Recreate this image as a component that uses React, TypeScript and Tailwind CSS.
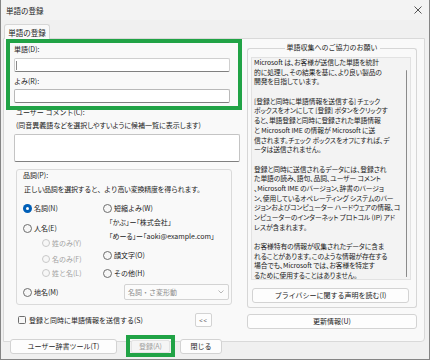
import React from "react";

const infoLines = [
  "Microsoft は、お客様が送信した単語を統計",
  "的に処理し、その結果を基に、より良い製品の",
  "開発を目指しています。",
  "",
  "[登録と同時に単語情報を送信する] チェック",
  "ボックスをオンにして [登録] ボタンをクリックす",
  "ると、単語登録と同時に登録された単語情報",
  "と Microsoft IME の情報が Microsoft に送",
  "信されます。チェック ボックスをオフにすれば、デ",
  "ータは送信されません。",
  "",
  "登録と同時に送信されるデータには、登録され",
  "た単語の読み、語句、品詞、ユーザー コメント",
  "、Microsoft IME のバージョン、辞書のバージョ",
  "ン、使用しているオペレーティング システムのバー",
  "ジョンおよびコンピューター ハードウェアの情報、コ",
  "ンピューターのインターネット プロトコル (IP) アド",
  "レスが含まれます。",
  "",
  "お客様特有の情報が収集されたデータに含ま",
  "れることがあります。このような情報が存在する",
  "場合でも、Microsoft では、お客様を特定す",
  "るために使用することはありません。",
];

function Radio({
  label,
  checked = false,
  disabled = false,
  small = false,
}: {
  label: string;
  checked?: boolean;
  disabled?: boolean;
  small?: boolean;
}) {
  return (
    <div className="flex items-center h-[10px] gap-[2px]">
      {checked ? (
        <span className="w-[9px] h-[9px] rounded-full bg-[#005fb8] flex items-center justify-center">
          <span className="w-[3px] h-[3px] rounded-full bg-white" />
        </span>
      ) : (
        <span
          className={
            small
              ? "w-[8px] h-[8px] rounded-full border border-[#c9c9c9] bg-[#f7f7f7]"
              : "w-[9px] h-[9px] rounded-full border border-[#6e6e6e] bg-[#f7f7f7]"
          }
        />
      )}
      <span className={disabled ? "text-[#a3a3a3]" : "text-[#1b1b1b]"}>{label}</span>
    </div>
  );
}

function Button({ label, className = "" }: { label: string; className?: string }) {
  return (
    <div
      className={
        "flex items-center justify-center bg-[#fdfdfd] border border-[#d3d3d3] rounded-[3px] text-[#1b1b1b] " +
        className
      }
    >
      {label}
    </div>
  );
}

export default function App() {
  return (
    <div className="w-[430px] h-[360px] bg-[#f0f0f0] border-x border-b border-[#858585] text-[7px] leading-[9px] text-[#1b1b1b] [font-family:'Noto_Sans_CJK_JP','Noto_Sans',sans-serif] overflow-hidden">
      {/* title bar */}
      <div className="h-[20px] flex items-center justify-between pl-[5px] pr-[7px] bg-[#f3f3f3]">
        <span className="text-[7.5px]">単語の登録</span>
        <svg width="8" height="8" viewBox="0 0 8 8">
          <path d="M0.5 0.5 L7.5 7.5 M7.5 0.5 L0.5 7.5" stroke="#2b2b2b" strokeWidth="0.8" />
        </svg>
      </div>

      {/* tabs */}
      <div className="mt-[4px] flex">
        <div className="ml-[3px] w-[46px] h-[15px] -mb-px relative z-10 bg-[#f9f9f9] border border-b-0 border-[#d6d6d6] rounded-t-[3px] flex items-center justify-center text-[7.5px]">
          単語の登録
        </div>
      </div>

      {/* tab panel */}
      <div className="ml-[2px] w-[422px] h-[304px] bg-[#f9f9f9] border border-[#d9d9d9] rounded-br-[4px] flex items-start">
        {/* left column */}
        <div className="w-[238px] flex flex-col">
          <div className="ml-[2px] w-[236px] h-[71px] border-4 border-[#21a346] relative z-10 flex flex-col pt-[2px]">
            <div className="pl-[4px]">単語(D):</div>
            <div className="mt-[4px] ml-[4px] w-[216px] h-[14px] bg-white border border-[#cfcfcf] border-b-[#808080] rounded-[2px] flex items-center">
              <span className="ml-[1px] w-px h-[9px] bg-[#8a8a8a]" />
            </div>
            <div className="pl-[4px] mt-[5px]">よみ(R):</div>
            <div className="mt-[3px] ml-[4px] w-[216px] h-[14px] bg-white border border-[#b9b9b9] border-b-[#808080] rounded-[2px]" />
          </div>

          <div className="ml-[12px] -mt-[2px]">ユーザー コメント(C):</div>
          <div className="ml-[12px] mt-[4px] whitespace-nowrap [font-feature-settings:'palt']">(同音異義語などを選択しやすいように候補一覧に表示します)</div>
          <div className="ml-[10px] mt-[4px] w-[226px] h-[28px] bg-white border border-[#c4c4c4] border-b-[#808080] rounded-[2px]" />

          {/* part of speech group */}
          <div className="ml-[12px] mt-[7px] w-[216px] border border-[#dadada] rounded-[3px] flex flex-col pt-[1px] pb-[4px] pl-[6px]">
            <div>品詞(P):</div>
            <div className="mt-[5px] pl-[1px] whitespace-nowrap tracking-[-0.3px]">正しい品詞を選択すると、より高い変換精度を得られます。</div>

            <div className="mt-[9px] flex">
              <div className="w-[80px] flex flex-col">
                <Radio label="名詞(N)" checked />
                <div className="mt-[10px]">
                  <Radio label="人名(E)" />
                </div>
                <div className="mt-[5px] ml-[19px]">
                  <Radio label="姓のみ(Y)" disabled small />
                </div>
                <div className="mt-[6px] ml-[19px]">
                  <Radio label="名のみ(F)" disabled small />
                </div>
                <div className="mt-[4px] ml-[19px]">
                  <Radio label="姓と名(L)" disabled small />
                </div>
              </div>
              <div className="flex flex-col">
                <Radio label="短縮よみ(W)" />
                <div className="mt-[2px] ml-[6px] leading-[14px] whitespace-nowrap [font-feature-settings:'palt']">
                  <div>「かぶ」ー「株式会社」</div>
                  <div>「めーる」ー「aoki@example.com」</div>
                </div>
                <div className="mt-[7px]">
                  <Radio label="顔文字(O)" />
                </div>
                <div className="mt-[8px]">
                  <Radio label="その他(H)" />
                </div>
              </div>
            </div>

            <div className="mt-[6px] h-[16px] flex items-center">
              <div className="w-[101px]">
                <Radio label="地名(M)" />
              </div>
              <div className="w-[105px] h-[16px] bg-[#fbfbfb] border border-[#d3d3d3] rounded-[2px] flex items-center justify-between pl-[3px] pr-[4px] text-[#8c8c8c]">
                <span>名詞・さ変形動</span>
                <svg width="6" height="4" viewBox="0 0 6 4">
                  <path d="M0.5 0.5 L3 3 L5.5 0.5" fill="none" stroke="#9a9a9a" strokeWidth="0.7" />
                </svg>
              </div>
            </div>
          </div>

          {/* send checkbox */}
          <div className="mt-[8px] h-[14px] flex items-center">
            <span className="ml-[14px] w-[8px] h-[8px] border border-[#6e6e6e] rounded-[1.5px] bg-[#f7f7f7]" />
            <span className="ml-[3px] whitespace-nowrap">登録と同時に単語情報を送信する(S)</span>
            <div className="ml-auto mr-[30px] w-[17px] h-[14px] bg-[#fdfdfd] border border-[#d3d3d3] rounded-[2px] flex items-center justify-center text-[6px] text-[#555] tracking-[1px]">
              &lt;&lt;
            </div>
          </div>
        </div>

        {/* right column */}
        <div className="ml-[5px] w-[170px] flex flex-col">
          <div className="mt-[4px] h-[9px] flex items-end">
            <div className="flex-1 h-[4px] border-t border-l border-[#d6d6d6] rounded-tl-[3px]" />
            <div className="px-[2px] self-center whitespace-nowrap">単語収集へのご協力のお願い</div>
            <div className="flex-1 h-[4px] border-t border-r border-[#d6d6d6] rounded-tr-[3px]" />
          </div>
          <div className="border-x border-b border-[#d6d6d6] rounded-b-[3px] flex flex-col pb-[4px]">
            <div className="mt-[5px] ml-[3px] w-[160px] h-[223px] bg-[#f3f3f3] border border-[#e2e2e2] flex overflow-hidden">
              <div className="w-[151px] pl-[2px] text-[6.8px] leading-[9.7px] tracking-[-0.1px] [font-feature-settings:'palt'] overflow-hidden">
                {infoLines.map((line, i) => (
                  <div key={i} className="h-[9.7px] whitespace-nowrap">
                    {line}
                  </div>
                ))}
              </div>
              <div className="w-[7px] flex justify-center">
                <div className="mt-[12px] w-[1.5px] h-[207px] rounded-full bg-[#8a8a8a]" />
              </div>
            </div>
            <Button label="プライバシーに関する声明を読む(I)" className="mt-[8px] ml-[4px] w-[157px] h-[15px]" />
          </div>
          <Button label="更新情報(U)" className="mt-[6px] w-[170px] h-[15px]" />
        </div>
      </div>

      {/* bottom buttons */}
      <div className="-mt-[7px] h-[22px] flex items-center relative z-10">
        <Button label="ユーザー辞書ツール(T)" className="ml-[9px] w-[107px] h-[15px]" />
        <div className="ml-[9px] w-[49px] h-[22px] border-4 border-[#21a346] flex items-center justify-center">
          <div className="w-[39px] h-[13px] bg-[#f5f5f5] border border-[#e3e3e3] rounded-[2px] flex items-center justify-center text-[#a0a0a0]">
            登録(A)
          </div>
        </div>
        <Button label="閉じる" className="ml-[5px] w-[42px] h-[15px]" />
      </div>
    </div>
  );
}
